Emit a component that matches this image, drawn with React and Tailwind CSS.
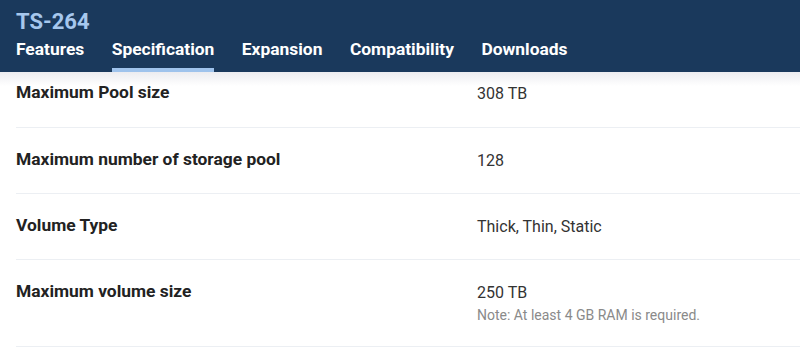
import React from "react";

const rows = [
  { label: "Maximum Pool size", value: "308 TB", first: true },
  { label: "Maximum number of storage pool", value: "128" },
  { label: "Volume Type", value: "Thick, Thin, Static" },
  { label: "Maximum volume size", value: "250 TB", note: "Note: At least 4 GB RAM is required." },
];

const tabs = ["Features", "Specification", "Expansion", "Compatibility", "Downloads"];

export default function App() {
  return (
    <div className="w-[800px] h-[357px] overflow-hidden bg-white" style={{ fontFamily: "Roboto, 'Noto Sans', sans-serif" }}>
      <header className="relative z-10 bg-[#1a395c] px-4 pt-[7px]">
        <div className="text-[22px] leading-[30px] font-bold text-[#a6c7ed]">TS-264</div>
        <nav className="flex gap-[27.5px]">
          {tabs.map((t) => (
            <div
              key={t}
              className={
                "text-[17.4px] leading-6 font-bold text-white pb-[7px] border-b-4 " +
                (t === "Specification" ? "border-[#9fc3ec]" : "border-transparent")
              }
            >
              {t}
            </div>
          ))}
        </nav>
        <div className="absolute left-0 right-0 top-full h-[14px] bg-gradient-to-b from-[#ececf0] to-white/0" />
      </header>
      <div className="pl-4">
        {rows.map((r) => (
          <div
            key={r.label}
            className={
              "grid grid-cols-[461px_1fr] items-start border-b border-[#eceff3] " +
              (r.first ? "pt-[9px] pb-[21px]" : r.note ? "pt-[20px] pb-[21px]" : "pt-[20px] pb-[20px]")
            }
          >
            <div className="text-[17.4px] leading-[22px] font-bold text-[#222]">{r.label}</div>
            <div className="pt-[1px]">
              <div className="text-[16px] leading-6 text-[#333]">{r.value}</div>
              {r.note && <div className="text-[14px] leading-5 text-[#8a8a8a]">{r.note}</div>}
            </div>
          </div>
        ))}
      </div>
    </div>
  );
}
